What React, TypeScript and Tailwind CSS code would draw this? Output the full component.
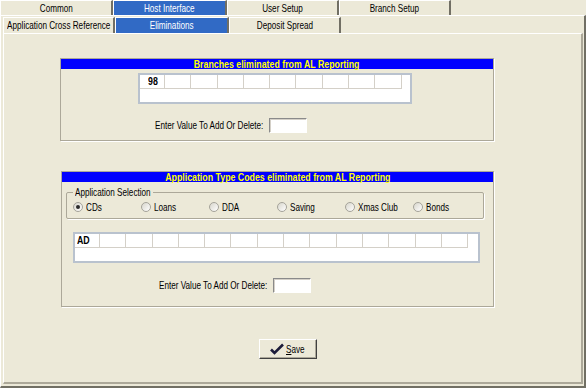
import React from 'react'

const radios = ['CDs', 'Loans', 'DDA', 'Saving', 'Xmas Club', 'Bonds']

// the source picture is horizontally squeezed, so text is narrowed with scale-x
function T({ children, origin = 'center', bold }: { children: React.ReactNode; origin?: 'left' | 'center' | 'right'; bold?: boolean }) {
  const o = origin === 'left' ? 'origin-left' : origin === 'right' ? 'origin-right' : 'origin-center'
  return (
    <span className={`inline-block whitespace-nowrap ${o} ${bold ? 'scale-x-[0.8] font-bold' : 'scale-x-[0.74]'}`}>
      {children}
    </span>
  )
}

function Tab({ label, active, className }: { label: string; active?: boolean; className: string }) {
  return (
    <div
      className={`flex h-full items-center justify-center overflow-visible border-t border-l border-t-white border-l-white border-r-2 border-r-[#716F64] ${
        active ? 'bg-[#316AC5] text-white' : 'text-black'
      } ${className}`}
    >
      <T>{label}</T>
    </div>
  )
}

function Cells({ first, count, firstPad }: { first: string; count: number; firstPad: string }) {
  return (
    <div className="flex h-[14px]">
      <div className={`flex h-full w-[25px] items-center border-r border-b border-[#D4D0C8] ${firstPad}`}>
        <T origin="left" bold>
          {first}
        </T>
      </div>
      {Array.from({ length: count }).map((_, i) => (
        <div key={i} className="h-full w-[26.3px] border-r border-b border-[#D4D0C8]" />
      ))}
    </div>
  )
}

function InputBox({ className }: { className: string }) {
  return (
    <div
      className={`h-[15px] border border-t-[#8A8A8A] border-l-[#8A8A8A] border-r-white border-b-white bg-white shadow-[inset_1px_1px_0_#D4D0C8] ${className}`}
    />
  )
}

function Radio({ label, checked }: { label: string; checked?: boolean }) {
  return (
    <div className="flex w-[68px] items-center gap-[3px]">
      <div className="flex h-[10px] w-[10px] shrink-0 items-center justify-center rounded-full border border-[#A5A39A] bg-gradient-to-br from-[#D8D6CC] to-white">
        {checked && <div className="h-[4px] w-[4px] rounded-full bg-[#2B2B2B]" />}
      </div>
      <T origin="left">{label}</T>
    </div>
  )
}

function Header({ text }: { text: string }) {
  return (
    <div className="flex h-[10px] items-center justify-center bg-[#0000FF] text-[#FFFF00]">
      <T bold>{text}</T>
    </div>
  )
}

export default function App() {
  return (
    <div className="flex h-[388px] w-[586px] flex-col overflow-hidden bg-[#ECE9D8] font-[family-name:'Liberation_Sans',Arial,sans-serif] text-[11px] leading-none text-black">
      {/* top tab row */}
      <div className="flex h-[15px]">
        <Tab label="Common" className="w-[113px]" />
        <Tab label="Host Interface" active className="w-[114px]" />
        <Tab label="User Setup" className="w-[112px]" />
        <Tab label="Branch Setup" className="w-[112px]" />
      </div>

      <div className="flex flex-1 flex-col border-t border-l border-t-white border-l-white border-r-2 border-b-2 border-r-[#716F64] border-b-[#716F64] pl-[2px] pr-[1px] pb-[2px]">
        {/* second tab row */}
        <div className="flex h-[17px] pt-px">
          <Tab label="Application Cross Reference" className="w-[112px]" />
          <Tab label="Eliminations" active className="w-[114px]" />
          <Tab label="Deposit Spread" className="w-[112px]" />
        </div>

        <div className="flex flex-1 flex-col border-t border-l border-t-white border-l-white border-r-2 border-b-2 border-r-[#ACA899] border-b-[#ACA899]">
          {/* Branches group */}
          <div className="mt-[24px] ml-[56px] flex h-[83px] w-[434px] flex-col border border-[#ACA899] shadow-[1px_1px_0_#fff]">
            <Header text="Branches eliminated from AL Reporting" />
            <div className="mt-[4px] ml-[77px] h-[31px] w-[274px] border-2 border-[#B9C2CE] bg-white">
              <Cells first="98" count={9} firstPad="pl-[8px]" />
            </div>
            <div className="mt-[14px] flex items-center">
              <div className="w-[202px] text-right">
                <T origin="right">Enter Value To Add Or Delete:</T>
              </div>
              <InputBox className="ml-[6px] w-[38px]" />
            </div>
          </div>

          {/* Application Type Codes group */}
          <div className="mt-[30px] ml-[57px] flex h-[136px] w-[433px] flex-col border border-[#ACA899] shadow-[1px_1px_0_#fff]">
            <Header text="Application Type Codes eliminated from AL Reporting" />
            <div className="relative mt-[10px] ml-[4px] h-[27px] w-[418px] rounded-[2px] border border-[#ACA899] shadow-[1px_1px_0_#fff]">
              <span className="absolute -top-[6px] left-[6px] w-[80px] bg-[#ECE9D8] px-[2px]">
                <T origin="left">Application Selection</T>
              </span>
              <div className="flex h-full items-center pt-[3px] pl-[6px]">
                {radios.map((r, i) => (
                  <Radio key={r} label={r} checked={i === 0} />
                ))}
              </div>
            </div>
            <div className="mt-[13px] ml-[11px] h-[31px] w-[407px] border-2 border-[#B9C2CE] bg-white">
              <Cells first="AD" count={14} firstPad="pl-[2px]" />
            </div>
            <div className="mt-[15px] flex items-center">
              <div className="w-[205px] text-right">
                <T origin="right">Enter Value To Add Or Delete:</T>
              </div>
              <InputBox className="ml-[6px] w-[38px]" />
            </div>
          </div>

          {/* Save */}
          <div className="mt-[32px] ml-[255px] flex h-[20px] w-[58px] items-center justify-center gap-[2px] border border-t-white border-l-white border-r-[#404040] border-b-[#404040] bg-[#ECE9D8] shadow-[inset_-1px_-1px_0_#ACA899]">
            <svg width="14" height="12" viewBox="0 0 14 12">
              <path d="M1 6.5 L4.5 10 L13 1.5" fill="none" stroke="#1C1C3A" strokeWidth="2.6" strokeLinejoin="miter" />
            </svg>
            <span className="w-[20px]">
              <T origin="left">
                <span className="underline">S</span>ave
              </T>
            </span>
          </div>
        </div>
      </div>
    </div>
  )
}
